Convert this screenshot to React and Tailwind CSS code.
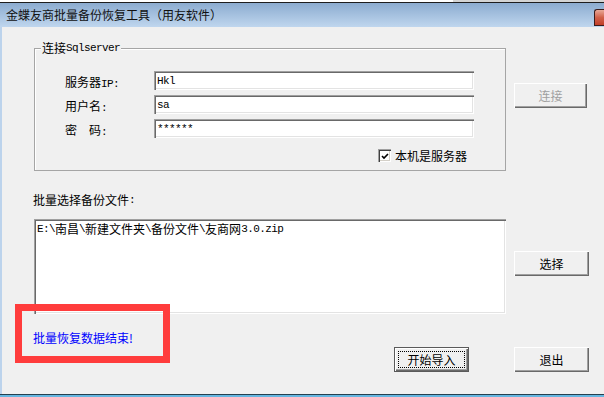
import React from "react";

function Mix({ text }) {
  const runs = [];
  let cur = "";
  let curAscii = null;
  for (const ch of text) {
    const a = ch.charCodeAt(0) < 128;
    if (curAscii === null || a === curAscii) {
      cur += ch;
      curAscii = a;
    } else {
      runs.push([cur, curAscii]);
      cur = ch;
      curAscii = a;
    }
  }
  if (cur) runs.push([cur, curAscii]);
  return (
    <>
      {runs.map(([t, a], i) => (
        <span
          key={i}
          className={
            a
              ? "font-['Liberation_Mono',monospace] text-[11px] tracking-[-0.6px] whitespace-pre"
              : "font-['Noto_Sans_CJK_SC',sans-serif] text-[12px] whitespace-pre"
          }
        >
          {t}
        </span>
      ))}
    </>
  );
}

function Btn({ children, disabled, isDefault, className = "" }) {
  if (isDefault) {
    return (
      <div className={"h-[25px] border border-[#5a5a5a] bg-[#f0f0f0] " + className}>
        <div className="h-full w-full p-[3px] shadow-[inset_1px_1px_0_#ffffff,inset_-1px_-1px_0_#696969,inset_-2px_-2px_0_#a0a0a0]">
          <div className="flex h-full w-full items-center justify-center border border-dotted border-black text-[12px] leading-none text-black">
            {children}
          </div>
        </div>
      </div>
    );
  }
  return (
    <div
      className={
        "flex h-[25px] items-center justify-center bg-[#f0f0f0] text-[12px] leading-none shadow-[inset_1px_1px_0_#ffffff,inset_-1px_-1px_0_#696969,inset_-2px_-2px_0_#a0a0a0] " +
        (disabled ? "text-[#a0a0a0] " : "text-black ") +
        className
      }
    >
      {children}
    </div>
  );
}

function Field({ value }) {
  return (
    <div className="flex h-[19px] w-[320px] items-center bg-white pl-[3px] pt-[1px] leading-none text-black shadow-[inset_1px_1px_0_#a0a0a0,inset_2px_2px_0_#696969,inset_-1px_-1px_0_#ffffff,inset_-2px_-2px_0_#e3e3e3]">
      <Mix text={value} />
    </div>
  );
}

export default function App() {
  return (
    <div className="relative h-[397px] w-[604px] overflow-hidden bg-[#f0f0f0] font-['Noto_Sans_CJK_SC',sans-serif] text-black">
      {/* desktop strip behind */}
      <div className="flex h-[3px]">
        <div className="w-[453px] border-b border-[#1e1e1e] bg-white" />
        <div className="flex-1 border-b border-[#1e1e1e] bg-[#d4d4d4]" />
      </div>

      {/* title bar */}
      <div className="flex h-[24px] items-center bg-gradient-to-b from-[#8cacd0] to-[#bfd6ee] pl-[6px]">
        <span className="font-['Microsoft_YaHei','Noto_Sans_CJK_SC',sans-serif] text-[12px] leading-none text-[#111]">
          金蝶友商批量备份恢复工具（用友软件）
        </span>
        <div className="ml-auto mt-[6px] h-[17px] w-[10px] self-start rounded-tl-[3px] border border-r-0 border-[#3b1c1c] bg-gradient-to-b from-[#e8a898] via-[#d0604a] to-[#c23e28]" />
      </div>

      {/* body */}
      <div className="flex h-[367px]">
        <div className="w-[2px] bg-[#bcd3ec]" />
        <div className="relative flex flex-1 flex-col bg-[#f0f0f0]">
          {/* section 1 */}
          <div className="flex pt-[21px]">
            <div className="relative ml-[32px] h-[123px] w-[472px] border border-[#a5a5a5] shadow-[inset_1px_1px_0_#ffffff]">
              <div className="absolute left-[6px] top-[-8px] flex h-[14px] items-center bg-[#f0f0f0] px-[1px] leading-none">
                <Mix text="连接Sqlserver" />
              </div>
              <div className="flex flex-col gap-[5px] pl-[30px] pt-[22px]">
                <div className="flex h-[19px] items-center">
                  <div className="w-[89px] leading-none">
                    <Mix text="服务器IP:" />
                  </div>
                  <Field value="Hkl" />
                </div>
                <div className="flex h-[19px] items-center">
                  <div className="w-[89px] leading-none">
                    <Mix text="用户名:" />
                  </div>
                  <Field value="sa" />
                </div>
                <div className="flex h-[19px] items-center">
                  <div className="w-[89px] leading-none">
                    <Mix text="密  码:" />
                  </div>
                  <Field value="******" />
                </div>
              </div>
              <div className="ml-[343px] mt-[11px] flex items-center gap-[4px]">
                <div className="flex h-[13px] w-[13px] items-center justify-center bg-white shadow-[inset_1px_1px_0_#a0a0a0,inset_2px_2px_0_#404040,inset_-1px_-1px_0_#ffffff,inset_-2px_-2px_0_#d4d0c8]">
                  <svg width="9" height="9" viewBox="0 0 9 9" className="ml-[1px] mt-[1px]">
                    <path d="M1 4 L3 6 L7 2" fill="none" stroke="#000" strokeWidth="1.6" />
                  </svg>
                </div>
                <span className="text-[12px] leading-none">本机是服务器</span>
              </div>
            </div>
            <div className="ml-[8px] pt-[35px]">
              <Btn disabled className="w-[73px]">
                连接
              </Btn>
            </div>
          </div>

          {/* section 2 */}
          <div className="ml-[31px] mt-[22px] flex h-[14px] items-center leading-none">
            <Mix text="批量选择备份文件:" />
          </div>
          <div className="mt-[12px] flex">
            <div className="ml-[32px] h-[95px] w-[472px] bg-white pl-[3px] pt-[3px] leading-[14px] shadow-[inset_1px_1px_0_#a0a0a0,inset_2px_2px_0_#696969,inset_-1px_-1px_0_#ffffff,inset_-2px_-2px_0_#e3e3e3]">
              <div className="flex h-[14px] items-center leading-none">
                <Mix text={"E:\\南昌\\新建文件夹\\备份文件\\友商网3.0.zip"} />
              </div>
            </div>
            <div className="ml-[8px] mt-[32px]">
              <Btn className="w-[75px]">选择</Btn>
            </div>
          </div>

          {/* section 3 */}
          <div className="flex">
            <div className="w-[392px] pl-[31px] pt-[17px]">
              <div className="flex h-[14px] items-center text-[12px] leading-none text-[#0000ff]">
                批量恢复数据结束!
              </div>
            </div>
            <div className="mt-[33px]">
              <Btn isDefault className="w-[75px]">
                开始导入
              </Btn>
            </div>
            <div className="ml-[45px] mt-[33px]">
              <Btn className="w-[75px]">退出</Btn>
            </div>
          </div>

          {/* red annotation */}
          <div className="pointer-events-none absolute left-[13px] top-[277px] h-[59px] w-[155px] border-[7px] border-[#ff3c3c]" />
        </div>
      </div>

      {/* bottom frame */}
      <div className="h-[1px] bg-[#24404f]" />
      <div className="h-[2px] bg-[#66b6e0]" />
    </div>
  );
}
